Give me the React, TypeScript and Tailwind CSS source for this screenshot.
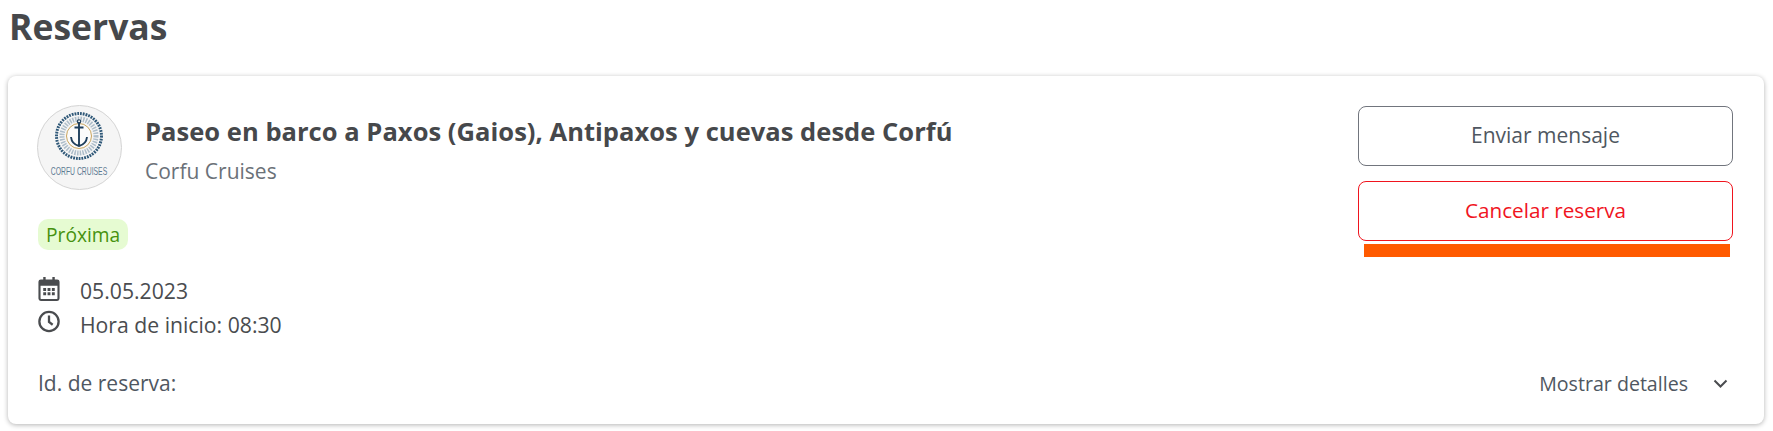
import React from "react";

function Logo() {
  return (
    <div className="w-[85px] h-[85px] rounded-full bg-[#f5f5f5] border border-[#d4d4d4] shrink-0 flex items-center justify-center">
      <svg width="83" height="83" viewBox="0 0 83 83">
        <circle cx="41" cy="30" r="22.500" fill="#f5f5f5" stroke="#2f5878" strokeWidth="3" strokeDasharray="1.800 1" />
        <circle cx="41" cy="30" r="17" fill="none" stroke="#8fa5b6" strokeWidth="5" strokeDasharray="1.500 1.200" opacity="0.7" />
        <circle cx="41" cy="30" r="12.500" fill="#fbfbfb" stroke="#c9a45c" strokeWidth="1" />
        <path d="M41 16v24M36.500 21.500h9M33 31c.5 5 4 8 8 9 4-1 7.500-4 8-9" fill="none" stroke="#1f3f5c" strokeWidth="1.900" />
        <circle cx="41" cy="15.500" r="1.700" fill="none" stroke="#1f3f5c" strokeWidth="1.100" />
        <text transform="translate(41 69) scale(0.62 1)" textAnchor="middle" fontSize="11" fill="#5d7a92" fontFamily="'Liberation Sans', sans-serif">CORFU CRUISES</text>
      </svg>
    </div>
  );
}

function CalendarIcon() {
  return (
    <svg width="22" height="24" viewBox="0 0 22 25" className="text-[#4a4c4f]">
      <path fill="currentColor" fillRule="evenodd" d="M5 0h2.500v2.500h7V0H17v2.500h2.500A2.500 2.500 0 0 1 22 5v17.500a2.500 2.500 0 0 1-2.500 2.500h-17A2.500 2.500 0 0 1 0 22.500V5a2.500 2.500 0 0 1 2.500-2.500H5V0ZM2.200 9v13.300c0 .3.200.5.500.5h16.600c.3 0 .5-.2.500-.5V9H2.200Z" />
      <path fill="currentColor" d="M5 11.500h3v3H5zM9.500 11.500h3v3h-3zM14 11.500h3v3h-3zM5 16h3v3H5zM9.500 16h3v3h-3zM14 16h3v3h-3z" />
    </svg>
  );
}

function ClockIcon() {
  return (
    <svg width="23" height="23" viewBox="0 0 24 24" fill="none" stroke="#4a4c4f" strokeWidth="2.500">
      <circle cx="12" cy="12" r="10.500" />
      <path d="M12 5.500V12.500l4 3" />
    </svg>
  );
}

export default function App() {
  return (
    <div className="w-[1773px] h-[431px] bg-white overflow-hidden text-[#4a4c4f] font-['Open_Sans',sans-serif]">
      <h1 className="pl-[9px] text-[35.500px] leading-[52px] font-bold text-[#46484b] h-[76px]">Reservas</h1>
      <div className="ml-2 w-[1756px] h-[348px] rounded-[8px] bg-white shadow-[0_1px_5px_rgba(0,0,0,0.3)] pl-[29px] pr-[31px] pt-[29px] flex flex-col">
        <div className="flex justify-between">
          <div className="flex flex-col">
            <div className="flex gap-[23px]">
              <Logo />
              <div className="pt-[8px]">
                <div className="text-[25.500px] tracking-[0.04px] leading-[36px] font-bold text-[#46484b]">Paseo en barco a Paxos (Gaios), Antipaxos y cuevas desde Corfú</div>
                <div className="mt-[7px] text-[21px] leading-[30px] text-[#6b7178]">Corfu Cruises</div>
              </div>
            </div>
            <span className="mt-[29px] ml-px self-start rounded-[10px] bg-[#e6fbd2] pl-2 w-[90px] h-[31px] leading-[31px] text-[19.200px] text-[#46920f]">Próxima</span>
            <div className="mt-[28px] flex flex-col gap-[8px] text-[21.200px] leading-[26px]">
              <div className="flex items-center gap-[20px] ml-px"><span className="w-[22px] flex justify-center -mt-[5px]"><CalendarIcon /></span><span>05.05.2023</span></div>
              <div className="flex items-center gap-[20px] ml-px"><span className="w-[22px] flex justify-center -mt-[7px]"><ClockIcon /></span><span>Hora de inicio: 08:30</span></div>
            </div>
          </div>
          <div className="flex flex-col w-[375px] mt-px">
            <button className="h-[60px] rounded-[8px] border border-[#71757d] text-[21px] text-[#4f5761]">Enviar mensaje</button>
            <button className="mt-[15px] h-[60px] rounded-[8px] border border-[#f0141e] text-[20.700px] text-[#f0141e]">Cancelar reserva</button>
            <div className="mt-[3px] ml-[6px] h-[13px] w-[366px] bg-[#ff5a00]" />
          </div>
        </div>
        <div className="mt-[29px] flex justify-between items-center text-[21px] leading-[30px]">
          <span className="ml-px text-[#4f5761]">Id. de reserva:</span>
          <div className="flex items-center gap-[25px] mr-[5px] mt-[2px]">
            <span className="text-[19.600px] text-[#4f5761]">Mostrar detalles</span>
            <svg width="15" height="10" viewBox="0 0 15 10" fill="none" stroke="#4a4c4f" strokeWidth="2"><path d="M1.500 1.500l6 6 6-6" /></svg>
          </div>
        </div>
      </div>
    </div>
  );
}
